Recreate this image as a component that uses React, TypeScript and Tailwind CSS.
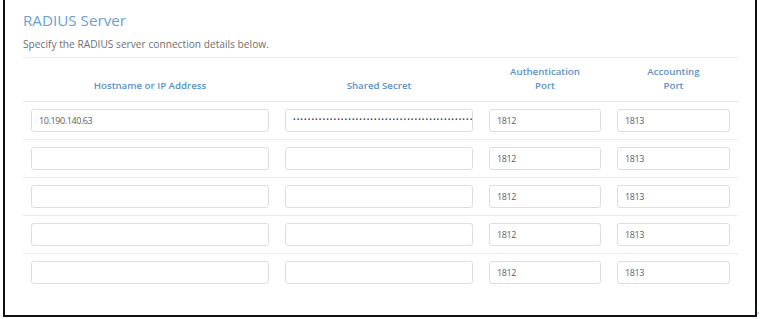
import React from "react";

const rows = [
  { host: "10.190.140.63", secret: true },
  { host: "", secret: false },
  { host: "", secret: false },
  { host: "", secret: false },
  { host: "", secret: false },
];

const cols = "grid grid-cols-[254px_204px_128px_129px]";

function Field({ value, children }: { value?: string; children?: React.ReactNode }) {
  return (
    <div className="h-[23px] w-full rounded-[3px] border border-[#dedede] bg-white px-[7px] flex items-center text-[9px] tracking-[-0.4px] text-[#606060] overflow-hidden whitespace-nowrap">
      {value}
      {children}
    </div>
  );
}

export default function App() {
  return (
    <div className="relative w-[760px] h-[319px] bg-white" style={{ fontFamily: '"Open Sans", "Liberation Sans", sans-serif' }}>
      <div className="ml-[3px] w-[754px] h-[317px] border-l-2 border-r-2 border-b-2 border-[#111] pl-[18px] pt-[10px]">
        <div className="w-[715px]">
          <div className="text-[15.2px] leading-[20px] text-[#6a9fd2]">RADIUS Server</div>
          <div className="mt-[7px] pb-[6px] border-b border-[#ececec] text-[10.2px] leading-[14px] text-[#6f6f6f]">
            Specify the RADIUS server connection details below.
          </div>
          <div className={`${cols} items-end pt-[7px] pb-[8px] border-b border-[#e6e6e6] text-[9.7px] leading-[14px] font-semibold text-[#5b92c7] text-center`}>
            <div>Hostname or IP Address</div>
            <div>Shared Secret</div>
            <div>
              Authentication
              <br />
              Port
            </div>
            <div>
              Accounting
              <br />
              Port
            </div>
          </div>
          {rows.map((r, i) => (
            <div key={i} className={`${cols} py-[7px] ${i < rows.length - 1 ? "border-b border-[#ececec]" : ""}`}>
              <div className="px-[8px]">
                <Field value={r.host} />
              </div>
              <div className="px-[8px]">
                <Field>
                  {r.secret ? (
                    <span className="text-[7px] tracking-[1.05px] text-[#444]">{"•".repeat(49)}</span>
                  ) : null}
                </Field>
              </div>
              <div className="px-[8px]">
                <Field value="1812" />
              </div>
              <div className="px-[8px]">
                <Field value="1813" />
              </div>
            </div>
          ))}
        </div>
      </div>
      <span className="absolute left-[757px] top-[306px] text-[8px] text-[#999]">‹</span>
    </div>
  );
}
